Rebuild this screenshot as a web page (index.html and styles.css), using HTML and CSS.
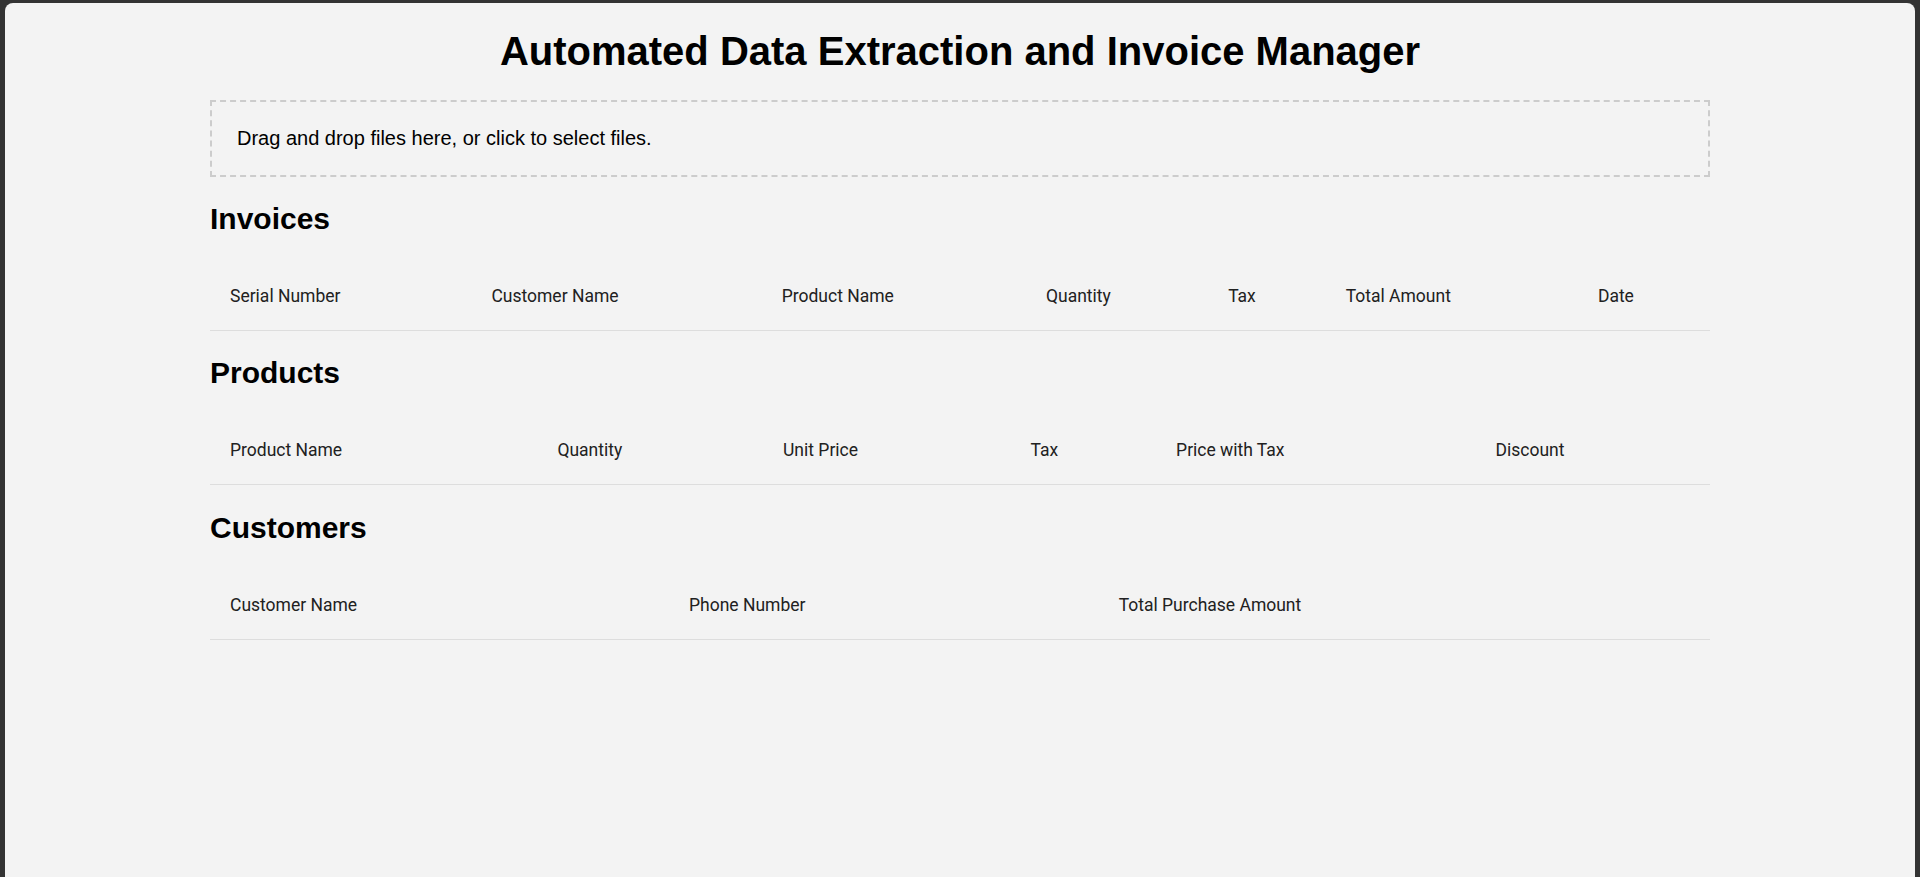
FILE: index.html
```html
<!DOCTYPE html>
<html lang="en">
<head>
<meta charset="utf-8">
<title>Automated Data Extraction and Invoice Manager</title>
<link rel="stylesheet" href="styles.css">
</head>
<body>
<div class="window">
  <div class="container">
    <h1 class="title">Automated Data Extraction and Invoice Manager</h1>
    <div class="dropzone">Drag and drop files here, or click to select files.</div>

    <h2 class="section-title">Invoices</h2>
    <table class="data-table">
      <thead>
        <tr>
          <th>Serial Number</th>
          <th>Customer Name</th>
          <th>Product Name</th>
          <th>Quantity</th>
          <th>Tax</th>
          <th>Total Amount</th>
          <th>Date</th>
        </tr>
      </thead>
      <tbody></tbody>
    </table>

    <h2 class="section-title">Products</h2>
    <table class="data-table">
      <thead>
        <tr>
          <th>Product Name</th>
          <th>Quantity</th>
          <th>Unit Price</th>
          <th>Tax</th>
          <th>Price with Tax</th>
          <th>Discount</th>
        </tr>
      </thead>
      <tbody></tbody>
    </table>

    <h2 class="section-title">Customers</h2>
    <table class="data-table">
      <thead>
        <tr>
          <th>Customer Name</th>
          <th>Phone Number</th>
          <th>Total Purchase Amount</th>
        </tr>
      </thead>
      <tbody></tbody>
    </table>
  </div>
</div>
</body>
</html>
```

FILE: styles.css
```css
html, body {
  height: 100%;
}
body {
  margin: 0;
  padding: 3px 5px 0 5px;
  box-sizing: border-box;
  background: #333333;
  font-family: "Liberation Sans", Arial, sans-serif;
  overflow: hidden;
}
.window {
  background: #f3f3f3;
  border-radius: 8px 8px 0 0;
  min-height: 100%;
  display: flow-root;
}
.container {
  max-width: 1500px;
  margin: 0 auto;
}
.title {
  font-size: 40px;
  font-weight: bold;
  text-align: center;
  color: #000;
  margin: 26px 0 26px;
}
.dropzone {
  border: 2px dashed #cccccc;
  padding: 25px;
  font-size: 20px;
  color: #000;
  cursor: pointer;
}
.section-title {
  font-size: 30px;
  font-weight: bold;
  color: #000;
  margin: 24.9px 0;
}
.data-table {
  width: 100%;
  border-collapse: collapse;
  font-family: Roboto, "Liberation Sans", sans-serif;
  font-size: 17.5px;
  margin-bottom: 25.5px;
}
.data-table th {
  text-align: left;
  font-weight: normal;
  color: #212121;
  padding: 25px 20px 24px;
  border-bottom: 1px solid #dddddd;
}
```
